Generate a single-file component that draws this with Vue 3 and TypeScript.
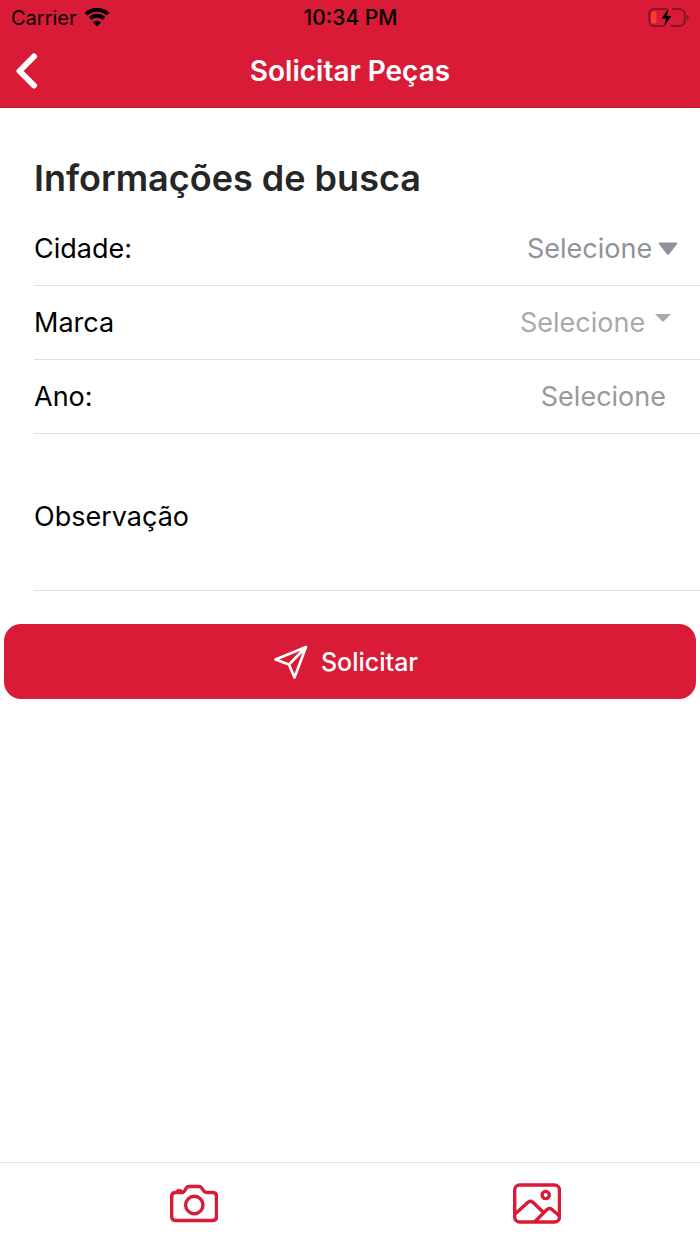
<script setup lang="ts">
import { ref } from 'vue'

const city = ref('')
const brand = ref('')
const year = ref('')
const notes = ref('')
</script>

<template>
  <div class="screen">
    <header class="top">
      <div class="status">
        <div class="carrier">
          <span>Carrier</span>
          <svg class="wifi" viewBox="0 0 26 20" aria-hidden="true">
            <path d="M2 6.100C8 0.300 18 0.300 24 6.100" />
            <path d="M6.200 10.500C10 6.900 16 6.900 19.800 10.500" />
            <path class="fill" d="M13 18.500L8.800 14.300C11.200 12.100 14.800 12.100 17.200 14.300Z" />
          </svg>
        </div>
        <time>10:34 PM</time>
        <svg class="battery" viewBox="0 0 42 20" aria-hidden="true">
          <path class="case" d="M19 1H6.500C3.500 1 1.200 3 1.200 6V13C1.200 16 3.500 18 6.500 18H15.500M22.500 18H31.500C34.500 18 36.700 16 36.700 13V6C36.700 3 34.500 1 31.500 1H24" />
          <path class="knob" d="M38.500 7C41.500 7.500 41.500 12 38.500 12.500Z" />
          <rect class="level" x="3" y="3.500" width="5.500" height="12" rx="2" />
          <path class="bolt" d="M20.500 0.500L13.500 10.500H18L16 18.500L23.500 8H19Z" />
        </svg>
      </div>
      <div class="bar">
        <button class="back" type="button" aria-label="Voltar">
          <svg viewBox="0 0 24 38" aria-hidden="true"><path d="M20 4.500L5.500 19L20 33.500" /></svg>
        </button>
        <h1>Solicitar Peças</h1>
      </div>
    </header>

    <main>
      <form @submit.prevent>
        <h2>Informações de busca</h2>
        <div class="row city">
          <label for="city">Cidade:</label>
          <div class="picker">
            <select id="city" v-model="city"><option value="">Selecione</option></select>
            <svg viewBox="0 0 20 14" aria-hidden="true"><path d="M1.500 0.500H18.500Q20 0.800 19 2L11.200 12.200Q10 13.500 8.800 12.200L1 2Q0 0.800 1.500 0.500Z" /></svg>
          </div>
        </div>
        <div class="row brand">
          <label for="brand">Marca</label>
          <div class="picker">
            <select id="brand" v-model="brand"><option value="">Selecione</option></select>
            <svg viewBox="0 0 16 18" aria-hidden="true"><path d="M0 0H16L8 8Z" /></svg>
          </div>
        </div>
        <div class="row year">
          <label for="year">Ano:</label>
          <input id="year" v-model="year" type="text" inputmode="numeric" placeholder="Selecione">
        </div>
        <div class="row notes">
          <label for="notes">Observação</label>
          <textarea id="notes" v-model="notes" rows="3"></textarea>
        </div>
        <button class="submit" type="submit">
          <svg viewBox="0 0 34 34" aria-hidden="true">
            <path d="M32 2L1.500 14.500L15 19.500L20.500 32.500ZM32 2L15 19.500" />
          </svg>
          <span>Solicitar</span>
        </button>
      </form>
    </main>

    <footer>
      <button class="camera" type="button" aria-label="Câmera">
        <svg viewBox="0 0 48 42" aria-hidden="true">
          <path d="M5.500 9.500H12.500C15.500 9.500 15 3.500 19 3.500H29C33 3.500 32.500 9.500 36.500 9.500H42.500Q46.500 9.500 46.500 13.500V33.500Q46.500 37.500 42.500 37.500H5.500Q1.700 37.500 1.700 33.500V13.500Q1.700 9.500 5.500 9.500Z" />
          <circle cx="24.300" cy="22" r="8.700" />
          <path class="shutter" d="M6 8.500C6 5.500 12.500 5.500 12.500 8.500Z" />
        </svg>
      </button>
      <button class="gallery" type="button" aria-label="Galeria">
        <svg viewBox="0 0 48 42" aria-hidden="true">
          <rect x="1.700" y="2" width="44.800" height="37" rx="5" />
          <circle cx="32.700" cy="12" r="3.600" />
          <path d="M2 31L15 19.300Q17.500 17.300 20 19.300L31 30M21.500 39L34 26.500Q36.500 24.500 39 26.500L46 32.500" />
        </svg>
      </button>
    </footer>
  </div>
</template>

<style>
body {
  margin: 0;
  background: #fff;
}
</style>

<style scoped>
.screen {
  min-height: 100vh;
  display: flex;
  flex-direction: column;
  color: #000;
  background: #fff;
  font-family: Inter, "Liberation Sans", sans-serif;
  font-size: 27px;
}

.top {
  background: #d91b38;
  border-bottom: 1px solid #c61934;
}

.status {
  display: grid;
  grid-template-columns: 1fr auto 1fr;
  align-items: center;
  height: 35px;
  padding: 0 10px 0 11px;
  font-size: 20px;
}

.carrier {
  display: flex;
  align-items: center;
  gap: 7px;
}

.wifi {
  width: 26px;
  height: 20px;
  fill: none;
  stroke: #000;
  stroke-width: 4;
}

.wifi .fill {
  fill: #000;
  stroke: none;
}

time {
  font-size: 21px;
  font-weight: 500;
}

.battery {
  width: 42px;
  height: 20px;
  justify-self: end;
}

.case {
  fill: none;
  stroke: #85162a;
  stroke-width: 2;
}

.knob {
  fill: #85162a;
}

.level {
  fill: #ff3b30;
}

.bar {
  display: grid;
  grid-template-columns: 48px 1fr 48px;
  align-items: center;
  height: 72px;
}

button {
  padding: 0;
  border: 0;
  background: none;
  font: inherit;
  cursor: pointer;
}

svg {
  display: block;
  flex: none;
}

.back {
  padding-left: 14px;
}

.back svg {
  width: 24px;
  height: 38px;
  fill: none;
  stroke: #fff;
  stroke-width: 6;
  stroke-linecap: round;
  stroke-linejoin: round;
}

h1 {
  margin: 0;
  color: #fff;
  font-size: 28px;
  font-weight: 600;
  line-height: 36px;
  text-align: center;
}

main {
  flex: 1;
}

h2 {
  margin: 0;
  padding: 47px 34px 11px;
  color: #262626;
  font-size: 36px;
  font-weight: 600;
  line-height: 46px;
}

.row {
  display: flex;
  align-items: center;
  justify-content: space-between;
  box-sizing: border-box;
  min-height: 74px;
  margin-left: 34px;
  border-bottom: 1px solid #dedede;
}

.picker {
  display: flex;
  align-items: center;
}

select,
input,
textarea {
  margin: 0;
  padding: 0;
  border: 0;
  outline: 0;
  background: none;
  color: inherit;
  font: inherit;
}

select {
  appearance: none;
}

.city .picker {
  gap: 5px;
  padding-right: 22px;
  color: #8f929a;
}

.city svg {
  width: 20px;
  height: 14px;
  fill: currentColor;
}

.brand .picker {
  gap: 9px;
  padding-right: 29px;
  color: #a9a9a9;
}

.brand svg {
  width: 16px;
  height: 18px;
  fill: currentColor;
}

.year input {
  flex: 1;
  min-width: 0;
  padding-right: 34px;
  text-align: right;
}

.year input::placeholder {
  color: #999;
  opacity: 1;
}

.notes {
  min-height: 157px;
  padding-top: 8px;
}

.notes textarea {
  flex: 1;
  min-width: 0;
  margin-left: 16px;
  resize: none;
}

.submit {
  display: flex;
  align-items: center;
  justify-content: center;
  gap: 13px;
  width: calc(100% - 8px);
  height: 75px;
  margin: 33px 4px;
  padding-right: 8px;
  border-radius: 17px;
  background: #d91b38;
  color: #fff;
  font-size: 25px;
  font-weight: 500;
}

.submit svg {
  width: 34px;
  height: 34px;
  fill: none;
  stroke: #fff;
  stroke-width: 2.6;
  stroke-linejoin: round;
}

footer {
  display: grid;
  grid-template-columns: 1fr 1fr;
  height: 81px;
  border-top: 1px solid #e3e3e3;
}

footer button {
  display: flex;
  align-items: center;
  justify-content: center;
}

.camera {
  padding-left: 38px;
}

.gallery {
  padding-left: 24px;
}

footer svg {
  width: 48px;
  height: 42px;
  fill: none;
  stroke: #d91b38;
  stroke-width: 3.4;
}

footer .shutter {
  fill: #d91b38;
  stroke-width: 1;
}
</style>
